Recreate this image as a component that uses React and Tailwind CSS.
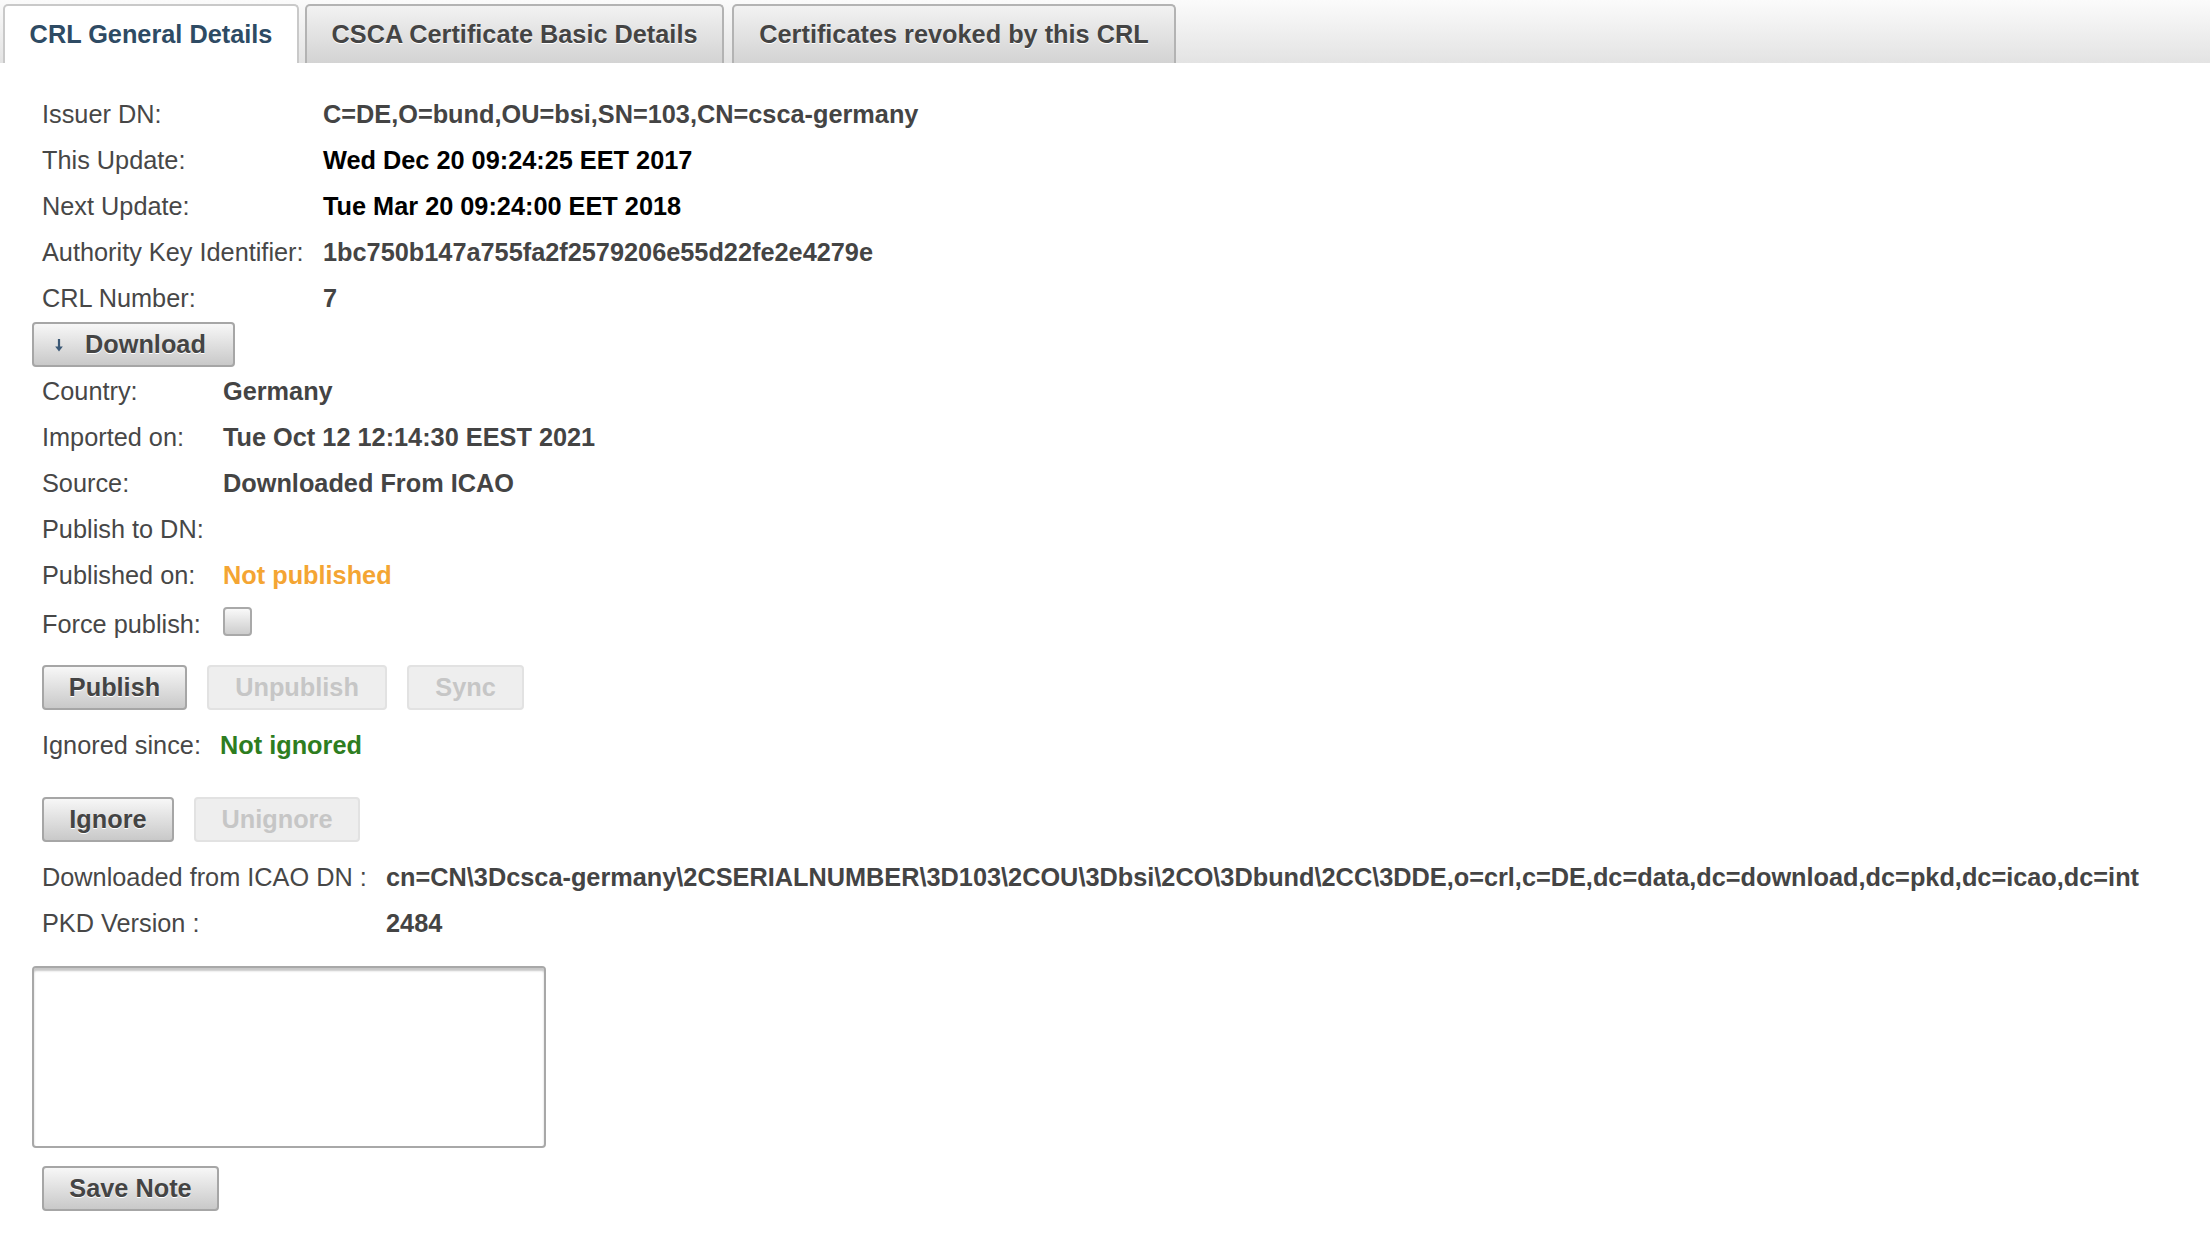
import React from 'react';

const FONT = "font-['Liberation_Sans',Arial,Helvetica,sans-serif]";

const btnBase =
  'flex h-[45px] items-center justify-center rounded-[4px] border-2 font-bold text-[25.3px] leading-none';
const btnOn =
  'border-[#a6a6a6] bg-gradient-to-b from-[#f7f7f7] to-[#c9c9c9] text-[#444] [text-shadow:0_1px_0_#fff]';
const btnOff = 'border-[#e2e2e2] bg-[#eeeeee] text-[#c6c6c6]';

function Button({ children, width, disabled }) {
  return (
    <button type="button" className={`${btnBase} ${width} ${disabled ? btnOff : btnOn}`}>
      {children}
    </button>
  );
}

function Row({ label, labelWidth, children, className = 'h-[46px]' }) {
  return (
    <div className={`flex items-center pl-[10px] pt-[3px] ${className}`}>
      <div className={`${labelWidth} shrink-0 text-[#474747]`}>{label}</div>
      <div className="font-bold text-[#444] whitespace-nowrap">{children}</div>
    </div>
  );
}

function Tab({ label, active, width }) {
  return (
    <div
      className={`flex h-[59px] items-center justify-center rounded-t-[5px] border-2 border-b-0 font-bold ${width} ${
        active
          ? 'bg-white border-[#c9c9c9] text-[#2e4b64]'
          : 'bg-gradient-to-b from-[#f2f2f2] to-[#d3d3d3] border-[#b3b3b3] text-[#444] [text-shadow:0_1px_0_#fff]'
      }`}
    >
      {label}
    </div>
  );
}

export default function App() {
  const crlRows = [
    { label: 'Issuer DN:', value: 'C=DE,O=bund,OU=bsi,SN=103,CN=csca-germany' },
    { label: 'This Update:', value: 'Wed Dec 20 09:24:25 EET 2017', dark: true },
    { label: 'Next Update:', value: 'Tue Mar 20 09:24:00 EET 2018', dark: true },
    { label: 'Authority Key Identifier:', value: '1bc750b147a755fa2f2579206e55d22fe2e4279e' },
    { label: 'CRL Number:', value: '7' },
  ];

  return (
    <div className={`min-h-screen bg-white text-[25.3px] leading-none ${FONT}`}>
      {/* tab strip */}
      <div className="flex h-[63px] items-end bg-gradient-to-b from-[#fbfbfb] to-[#e3e3e3] pl-[3px]">
        <Tab label="CRL General Details" active width="w-[296px]" />
        <div className="ml-[6px]">
          <Tab label="CSCA Certificate Basic Details" width="w-[419px]" />
        </div>
        <div className="ml-[8px]">
          <Tab label="Certificates revoked by this CRL" width="w-[444px]" />
        </div>
      </div>

      <div className="flex flex-col items-start pl-[32px] pt-[27px]">
        {/* CRL details */}
        <div className="flex flex-col">
          {crlRows.map((r) => (
            <Row key={r.label} label={r.label} labelWidth="w-[281px]">
              <span className={r.dark ? 'text-black' : ''}>{r.value}</span>
            </Row>
          ))}
        </div>

        <button
          type="button"
          className={`${btnBase} ${btnOn} mt-[2px] w-[203px] justify-start gap-[20px] pl-[19px]`}
        >
          <svg width="12" height="16" viewBox="0 0 12 16">
            <path d="M6 2v9" stroke="#3b5875" strokeWidth="2.2" />
            <path d="M2.2 9.5 6 14.5 9.8 9.5z" fill="#3b5875" />
          </svg>
          <span>Download</span>
        </button>

        {/* import info */}
        <div className="flex flex-col">
          <Row label="Country:" labelWidth="w-[181px]">Germany</Row>
          <Row label="Imported on:" labelWidth="w-[181px]">Tue Oct 12 12:14:30 EEST 2021</Row>
          <Row label="Source:" labelWidth="w-[181px]">Downloaded From ICAO</Row>
          <Row label="Publish to DN:" labelWidth="w-[181px]">{''}</Row>
          <Row label="Published on:" labelWidth="w-[181px]">
            <span className="text-[#f4a533]">Not published</span>
          </Row>
          <Row label="Force publish:" labelWidth="w-[181px]" className="h-[52px]">
            <div className="mb-[6px] h-[29px] w-[29px] rounded-[4px] border-2 border-[#a9a9a9] bg-gradient-to-b from-[#f9f9f9] to-[#cdcdcd]" />
          </Row>
        </div>

        <div className="mt-[16px] flex gap-[20px] pl-[10px]">
          <Button width="w-[145px]">Publish</Button>
          <Button width="w-[180px]" disabled>
            Unpublish
          </Button>
          <Button width="w-[117px]" disabled>
            Sync
          </Button>
        </div>

        <div className="mt-[11px]">
          <Row label="Ignored since:" labelWidth="w-[178px]">
            <span className="text-[#2e7d1f]">Not ignored</span>
          </Row>
        </div>

        <div className="mt-[30px] flex gap-[20px] pl-[10px]">
          <Button width="w-[132px]">Ignore</Button>
          <Button width="w-[166px]" disabled>
            Unignore
          </Button>
        </div>

        <div className="mt-[11px] flex flex-col">
          <Row label="Downloaded from ICAO DN :" labelWidth="w-[344px]">
            cn=CN\3Dcsca-germany\2CSERIALNUMBER\3D103\2COU\3Dbsi\2CO\3Dbund\2CC\3DDE,o=crl,c=DE,dc=data,dc=download,dc=pkd,dc=icao,dc=int
          </Row>
          <Row label="PKD Version :" labelWidth="w-[344px]">2484</Row>
        </div>

        <textarea
          className="mt-[21px] h-[182px] w-[514px] resize-none rounded-[4px] border-2 border-[#a8a8a8] bg-white shadow-[inset_0_3px_2px_rgba(0,0,0,0.22)] outline-none"
          defaultValue=""
        />

        <div className="mt-[18px] pl-[10px]">
          <Button width="w-[177px]">Save Note</Button>
        </div>
      </div>
    </div>
  );
}
